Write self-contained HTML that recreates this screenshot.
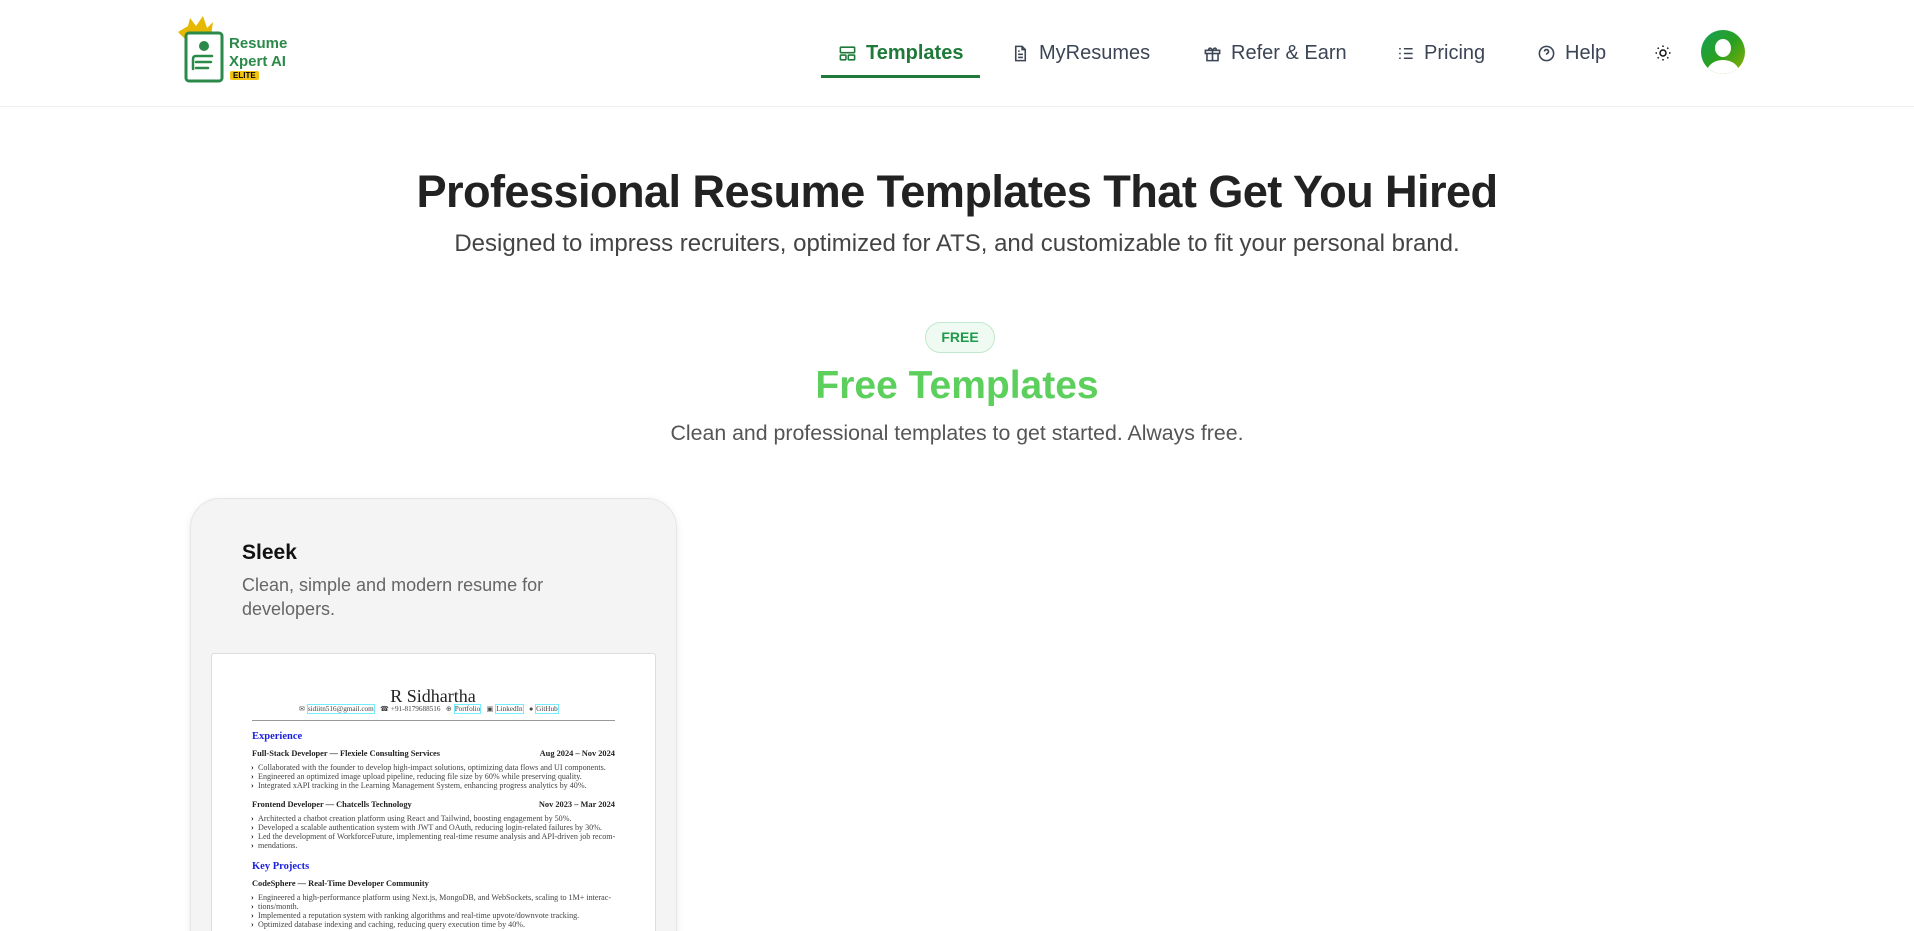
<!DOCTYPE html>
<html><head><meta charset="utf-8"><style>
*{margin:0;padding:0;box-sizing:border-box}
html,body{width:1914px;height:931px;overflow:hidden;background:#fff}
body{font-family:"Liberation Sans",sans-serif}
#w{position:relative;width:1914px;height:931px;overflow:hidden}
.hdr{position:absolute;left:0;top:0;width:1914px;height:107px;border-bottom:1px solid #eee}
.nav{position:absolute;top:42px;font-size:20px;color:#3c4555;display:flex;align-items:center;gap:9px}
.nav svg{width:19px;height:19px}
.abs{position:absolute}
.c{text-align:center;width:1914px;left:0;white-space:nowrap}
.r{font-family:"Liberation Serif",serif;color:#222;position:absolute;white-space:nowrap}
.b{font-size:8.1px;color:#444;left:258px}
.b:before{content:"›";font-weight:bold;position:absolute;left:-7px;color:#000}
.h{font-size:10.5px;color:#1c22e0;font-weight:bold;left:252px}
.j{font-size:8.4px;font-weight:bold;left:252px}
</style></head><body><div id="w">
<div class="hdr">
 <svg class="abs" style="left:176px;top:16px" width="50" height="70" viewBox="0 0 50 70">
  <polygon points="2,16 12,10 14,2 20,10 27,0 31,12 37,6 35,20 10,24" fill="#e6b800"/>
  <rect x="10" y="17" width="36" height="48" rx="3" fill="#fff" stroke="#2b8a4a" stroke-width="3"/>
  <circle cx="28" cy="30" r="5" fill="#2b8a4a"/>
  <path d="M17 53V43q0-3 3-3h16M20 46h15M20 52h12" stroke="#2b8a4a" stroke-width="2.5" fill="none" stroke-linecap="round"/>
 </svg>
 <div class="abs" style="left:229px;top:35px;font-size:15px;font-weight:bold;color:#2b8a4a;line-height:18px">Resume<br>Xpert AI</div>
 <div class="abs" style="left:230px;top:71px;font-size:8px;font-weight:bold;background:#f1c40f;padding:0 3px;border-radius:2px;line-height:9px">ELITE</div>
 <div class="nav" style="left:838px;color:#1f7a3a;font-weight:bold"><svg viewBox="0 0 24 24" fill="none" stroke="#1f7a3a" stroke-width="2"><rect x="3" y="4" width="18" height="7" rx="1"/><rect x="3" y="14" width="7" height="6" rx="1"/><rect x="13" y="14" width="8" height="6" rx="1"/></svg>Templates</div>
 <div class="abs" style="left:821px;top:75px;width:159px;height:3px;background:#1f7a3a"></div>
 <div class="nav" style="left:1011px"><svg viewBox="0 0 24 24" fill="none" stroke="#3c4555" stroke-width="2"><path d="M14 3H6v18h12V7z M14 3v4h4 M9 13h6M9 17h6M9 9h2"/></svg>MyResumes</div>
 <div class="nav" style="left:1203px"><svg viewBox="0 0 24 24" fill="none" stroke="#3c4555" stroke-width="2"><rect x="3" y="8" width="18" height="4"/><path d="M5 12v9h14v-9M12 8v13M12 8C9 3 6 6 8 8M12 8c3-5 6-2 4 0"/></svg>Refer &amp; Earn</div>
 <div class="nav" style="left:1396px"><svg viewBox="0 0 24 24" fill="none" stroke="#3c4555" stroke-width="2"><path d="M10 6h11M10 12h11M10 18h11M4 6h2M4 12h2M4 18h2"/></svg>Pricing</div>
 <div class="nav" style="left:1537px"><svg viewBox="0 0 24 24" fill="none" stroke="#3c4555" stroke-width="2"><circle cx="12" cy="12" r="9"/><path d="M9.5 9.5a2.5 2.5 0 1 1 3.5 2.3c-.7.4-1 1-1 1.7M12 17h.01"/></svg>Help</div>
 <svg class="abs" style="left:1654px;top:44px" width="18" height="18" viewBox="0 0 24 24" fill="none" stroke="#111" stroke-width="2"><circle cx="12" cy="12" r="4"/><path d="M12 2v2M12 20v2M2 12h2M20 12h2M4.9 4.9l1.4 1.4M17.7 17.7l1.4 1.4M4.9 19.1l1.4-1.4M17.7 6.3l1.4-1.4"/></svg>
 <div class="abs" style="left:1701px;top:30px;width:44px;height:44px;border-radius:50%;background:linear-gradient(135deg,#14a05a,#2aa020 50%,#8fb000);overflow:hidden">
  <div class="abs" style="left:14px;top:9px;width:16px;height:18px;border-radius:50%;background:#fff"></div>
  <div class="abs" style="left:6px;top:30px;width:32px;height:24px;border-radius:50%;background:#fff"></div>
 </div>
</div>
<div class="abs c" style="top:166px;font-size:45.2px;font-weight:bold;color:#222;letter-spacing:-0.6px">Professional Resume Templates That Get You Hired</div>
<div class="abs c" style="top:230px;font-size:24px;color:#444">Designed to impress recruiters, optimized for ATS, and customizable to fit your personal brand.</div>
<div class="abs" style="left:925px;top:322px;width:70px;height:31px;border:1px solid #bfe9cc;background:#effbf2;border-radius:16px;color:#1f9a4a;font-size:14px;font-weight:bold;text-align:center;line-height:29px">FREE</div>
<div class="abs c" style="top:364px;font-size:39px;font-weight:bold;color:#5ccf5c">Free Templates</div>
<div class="abs c" style="top:421px;font-size:21.3px;color:#555">Clean and professional templates to get started. Always free.</div>
<div class="abs" style="left:190px;top:498px;width:487px;height:600px;border-radius:30px;background:#f4f4f4;box-shadow:0 2px 8px rgba(0,0,0,.08);border:1px solid #e6e6e6"></div>
<div class="abs" style="left:242px;top:541px;font-size:21px;color:#111;font-weight:bold">Sleek</div>
<div class="abs" style="left:242px;top:573px;font-size:18px;color:#666;line-height:24px">Clean, simple and modern resume for<br>developers.</div>
<div class="abs" style="left:211px;top:653px;width:445px;height:400px;background:#fff;border:1px solid #ddd;border-radius:3px"></div>
<div class="r" style="left:0;width:866px;text-align:center;top:686px;font-size:18px">R Sidhartha</div>
<div class="r" style="left:299px;top:704px;font-size:7.2px;color:#444">✉ <span style="border:1px solid #7ef">sidiitn516@gmail.com</span> &nbsp; ☎ +91-8179688516 &nbsp; ⊕ <span style="border:1px solid #7ef">Portfolio</span> &nbsp; ▣ <span style="border:1px solid #7ef">LinkedIn</span> &nbsp; ● <span style="border:1px solid #7ef">GitHub</span></div>
<div class="abs" style="left:252px;top:720px;width:363px;height:1px;background:#999"></div>
<div class="r h" style="top:731px">Experience</div>
<div class="r j" style="top:749px">Full-Stack Developer — Flexiele Consulting Services</div>
<div class="r j" style="top:749px;left:auto;right:1299px">Aug 2024 – Nov 2024</div>
<div class="r b" style="top:763px">Collaborated with the founder to develop high-impact solutions, optimizing data flows and UI components.</div>
<div class="r b" style="top:772px">Engineered an optimized image upload pipeline, reducing file size by 60% while preserving quality.</div>
<div class="r b" style="top:781px">Integrated xAPI tracking in the Learning Management System, enhancing progress analytics by 40%.</div>
<div class="r j" style="top:800px">Frontend Developer — Chatcells Technology</div>
<div class="r j" style="top:800px;left:auto;right:1299px">Nov 2023 – Mar 2024</div>
<div class="r b" style="top:814px">Architected a chatbot creation platform using React and Tailwind, boosting engagement by 50%.</div>
<div class="r b" style="top:823px">Developed a scalable authentication system with JWT and OAuth, reducing login-related failures by 30%.</div>
<div class="r b" style="top:832px">Led the development of WorkforceFuture, implementing real-time resume analysis and API-driven job recom-</div>
<div class="r b" style="top:841px">mendations.</div>
<div class="r h" style="top:861px">Key Projects</div>
<div class="r j" style="top:879px">CodeSphere — Real-Time Developer Community</div>
<div class="r b" style="top:893px">Engineered a high-performance platform using Next.js, MongoDB, and WebSockets, scaling to 1M+ interac-</div>
<div class="r b" style="top:902px">tions/month.</div>
<div class="r b" style="top:911px">Implemented a reputation system with ranking algorithms and real-time upvote/downvote tracking.</div>
<div class="r b" style="top:920px">Optimized database indexing and caching, reducing query execution time by 40%.</div>
</div></body></html>
